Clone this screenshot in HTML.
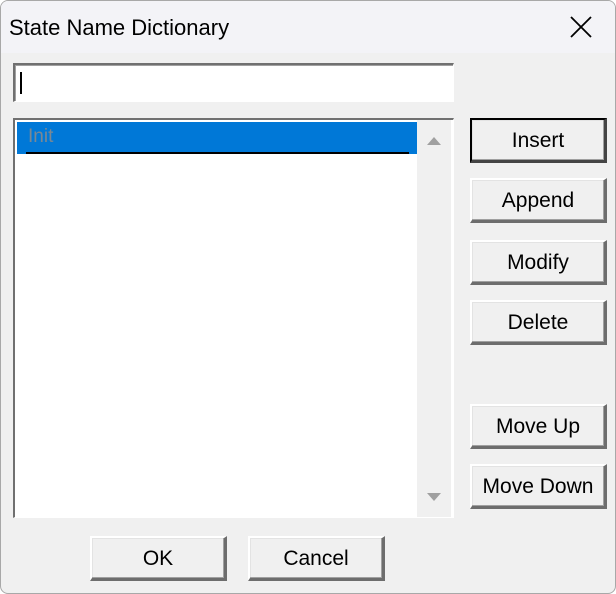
<!DOCTYPE html>
<html><head><style>
*{margin:0;padding:0;box-sizing:border-box}
body{width:616px;height:594px;background:#fff;font-family:"Liberation Sans",sans-serif;overflow:hidden;position:relative}
.win{position:absolute;left:0;top:0;width:616px;height:594px;background:#f0f0f0;border:1px solid #a8a8a8;border-radius:8px;overflow:hidden}
.title{position:absolute;left:0;top:0;width:616px;height:52px;background:#f3f3f7}
.title span{position:absolute;left:8px;top:14px;font-size:22px;color:#000}
.x{position:absolute;left:568px;top:14px}
.edit{position:absolute;left:12px;top:62px;width:441px;height:39px;background:#fff;border-top:2px solid #707070;border-left:2px solid #707070;border-right:1px solid #fff;border-bottom:1px solid #fff;box-shadow:inset 1px 1px 0 #a0a0a0}
.caret{position:absolute;left:5px;top:7px;width:2px;height:22px;background:#000}
.list{position:absolute;left:12px;top:117px;width:441px;height:400px;background:#fff;border-top:2px solid #707070;border-left:2px solid #707070;border-right:1px solid #fff;border-bottom:1px solid #fff}
.sel{position:absolute;left:2px;top:2px;width:400px;height:32px;background:#0078d7}
.sel span{position:absolute;left:11px;top:4px;font-size:19px;color:#7a8894}
.sel i{position:absolute;left:9px;bottom:0;width:383px;height:2px;background:#000}
.sb{position:absolute;left:402px;top:0;width:34px;height:397px;background:#f0f0f0}
.btn{position:absolute;width:137px;height:45px;background:#f0f0f0;border-top:2px solid #fff;border-left:2px solid #fff;border-right:3px solid #6d6d6d;border-bottom:3px solid #6d6d6d;box-shadow:inset -1px -1px 0 #a0a0a0,inset 1px 1px 0 #e3e3e3;font-size:21px;text-align:center;line-height:42px;color:#000}
.btn.d{border:2px solid #000;border-right:3px solid #444;border-bottom:3px solid #444}
</style></head><body>
<div class="win">
<div class="title"><span>State Name Dictionary</span>
<svg class="x" width="24" height="24" viewBox="0 0 24 24"><path d="M2 2L22 22M22 2L2 22" stroke="#000" stroke-width="1.8"/></svg></div>
<div class="edit"><div class="caret"></div></div>
<div class="list">
<div class="sel"><span>Init</span><i></i></div>
<div class="sb">
<svg style="position:absolute;left:9px;top:16px" width="16" height="10"><path d="M8 1L15 9H1Z" fill="#a0a0a0"/></svg>
<svg style="position:absolute;left:9px;top:372px" width="16" height="10"><path d="M1 1H15L8 9Z" fill="#a0a0a0"/></svg>
</div></div>
<div class="btn d" style="left:469px;top:117px">Insert</div>
<div class="btn" style="left:469px;top:177px">Append</div>
<div class="btn" style="left:469px;top:239px">Modify</div>
<div class="btn" style="left:469px;top:299px">Delete</div>
<div class="btn" style="left:469px;top:403px">Move Up</div>
<div class="btn" style="left:469px;top:463px">Move Down</div>
<div class="btn" style="left:89px;top:535px">OK</div>
<div class="btn" style="left:247px;top:535px">Cancel</div>
</div>
</body></html>
